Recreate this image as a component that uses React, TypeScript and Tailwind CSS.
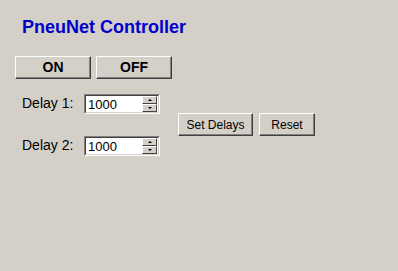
import React from "react";

function WinButton({ label, className }: { label: string; className: string }) {
  return (
    <button
      className={`flex items-center justify-center border border-t-white border-l-white border-r-[#404040] border-b-[#404040] bg-[#d4d0c8] shadow-[inset_-1px_-1px_0_#808080] text-black ${className}`}
    >
      {label}
    </button>
  );
}

function SpinBox({ value }: { value: string }) {
  return (
    <div className="flex h-[20px] w-[76px] border border-t-[#808080] border-l-[#808080] border-r-white border-b-white">
      <div className="flex flex-1 items-center border border-t-[#404040] border-l-[#404040] border-r-[#d4d0c8] border-b-[#d4d0c8] bg-white pr-[1px]">
        <span className="flex-1 pl-[2px] pt-[2px] text-[13px] text-black">{value}</span>
        <div className="flex h-full flex-col justify-center">
          <div className="flex h-[8px] w-[15px] items-center justify-center border border-t-white border-l-white border-r-[#404040] border-b-[#404040] bg-[#d4d0c8]">
            <div className="h-0 w-0 border-x-[2px] border-b-[2px] border-x-transparent border-b-black" />
          </div>
          <div className="flex h-[8px] w-[15px] items-center justify-center border border-t-white border-l-white border-r-[#404040] border-b-[#404040] bg-[#d4d0c8]">
            <div className="h-0 w-0 border-x-[2px] border-t-[2px] border-x-transparent border-t-black" />
          </div>
        </div>
      </div>
    </div>
  );
}

export default function App() {
  return (
    <div
      className="h-[271px] w-[398px] bg-[#d4d0c8] pl-[15px] pt-[16px]"
      style={{ fontFamily: '"Liberation Sans", Arial, sans-serif' }}
    >
      <h1 className="ml-[7px] h-[22px] text-[18px] font-bold leading-[22px] text-[#0000cc]">
        PneuNet Controller
      </h1>
      <div className="mt-[18px] flex gap-[5px]">
        <WinButton label="ON" className="h-[23px] w-[76px] text-[14px] font-bold" />
        <WinButton label="OFF" className="h-[23px] w-[76px] text-[14px] font-bold" />
      </div>
      <div className="mt-[14px] flex items-center">
        <div className="ml-[7px] flex flex-col gap-[21px]">
          <div className="flex items-center">
            <span className="w-[62px] text-[14px] text-black">Delay 1:</span>
            <SpinBox value="1000" />
          </div>
          <div className="flex items-center">
            <span className="w-[62px] text-[14px] text-black">Delay 2:</span>
            <SpinBox value="1000" />
          </div>
        </div>
        <div className="ml-[18px] flex gap-[6px]">
          <WinButton label="Set Delays" className="h-[23px] w-[75px] text-[12px]" />
          <WinButton label="Reset" className="h-[23px] w-[56px] text-[12px]" />
        </div>
      </div>
    </div>
  );
}
